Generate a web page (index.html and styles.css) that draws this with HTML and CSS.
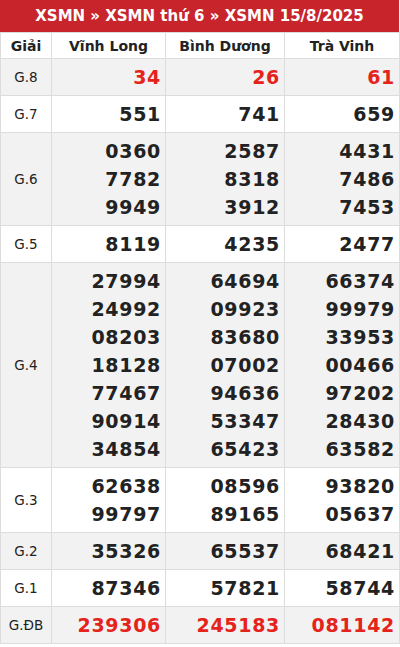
FILE: index.html
```html
<!DOCTYPE html>
<html lang="vi">
<head>
<meta charset="utf-8">
<link rel="stylesheet" href="styles.css">
</head>
<body>
<div class="box">
  <h1 class="title">XSMN » XSMN thứ 6 » XSMN 15/8/2025</h1>
  <table class="kq">
    <colgroup><col class="c0"><col class="c1"><col class="c2"><col class="c3"></colgroup>
    <thead>
      <tr><th>Giải</th><th>Vĩnh Long</th><th>Bình Dương</th><th>Trà Vinh</th></tr>
    </thead>
    <tbody>
      <tr class="alt"><td class="lbl">G.8</td><td class="num red">34</td><td class="num red">26</td><td class="num red">61</td></tr>
      <tr><td class="lbl">G.7</td><td class="num">551</td><td class="num">741</td><td class="num">659</td></tr>
      <tr class="alt"><td class="lbl">G.6</td><td class="num">0360<br>7782<br>9949</td><td class="num">2587<br>8318<br>3912</td><td class="num">4431<br>7486<br>7453</td></tr>
      <tr><td class="lbl">G.5</td><td class="num">8119</td><td class="num">4235</td><td class="num">2477</td></tr>
      <tr class="alt"><td class="lbl">G.4</td><td class="num">27994<br>24992<br>08203<br>18128<br>77467<br>90914<br>34854</td><td class="num">64694<br>09923<br>83680<br>07002<br>94636<br>53347<br>65423</td><td class="num">66374<br>99979<br>33953<br>00466<br>97202<br>28430<br>63582</td></tr>
      <tr><td class="lbl">G.3</td><td class="num">62638<br>99797</td><td class="num">08596<br>89165</td><td class="num">93820<br>05637</td></tr>
      <tr class="alt"><td class="lbl">G.2</td><td class="num">35326</td><td class="num">65537</td><td class="num">68421</td></tr>
      <tr><td class="lbl">G.1</td><td class="num">87346</td><td class="num">57821</td><td class="num">58744</td></tr>
      <tr class="alt"><td class="lbl">G.ĐB</td><td class="num red">239306</td><td class="num red">245183</td><td class="num red">081142</td></tr>
    </tbody>
  </table>
</div>
</body>
</html>
```
FILE: styles.css
```css
html, body {
  margin: 0;
  padding: 0;
  background: #fff;
}
body {
  font-family: "DejaVu Sans", sans-serif;
  color: #222;
}
.box {
  width: 399px;
}
.title {
  margin: 0;
  height: 32px;
  line-height: 32px;
  background: #c8242c;
  color: #fff;
  font-size: 15px;
  font-weight: bold;
  text-align: center;
}
.kq {
  width: 399px;
  border-collapse: collapse;
  table-layout: fixed;
}
.c0 { width: 51px; }
.c1 { width: 114px; }
.c2 { width: 119px; }
.c3 { width: 115px; }
.kq th, .kq td {
  border: 1px solid #dcdcdc;
}
.kq th {
  height: 25px;
  padding: 0;
  font-size: 14px;
  font-weight: bold;
  text-align: center;
  color: #222;
}
.kq tr.alt td {
  background: #f2f2f3;
}
.lbl {
  font-size: 13.5px;
  text-align: center;
  color: #222;
  padding: 0;
}
.num {
  font-size: 19px;
  font-weight: bold;
  line-height: 28px;
  letter-spacing: 0.7px;
  text-align: right;
  padding: 4px 4px 4px 0;
  color: #222;
}
.num.red {
  color: #e5231b;
}
```
